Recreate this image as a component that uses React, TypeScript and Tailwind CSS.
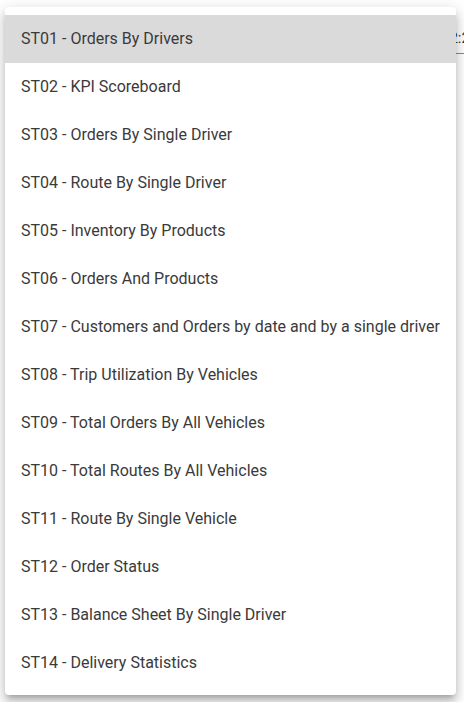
import React from "react";

const items = [
  "ST01 - Orders By Drivers",
  "ST02 - KPI Scoreboard",
  "ST03 - Orders By Single Driver",
  "ST04 - Route By Single Driver",
  "ST05 - Inventory By Products",
  "ST06 - Orders And Products",
  "ST07 - Customers and Orders by date and by a single driver",
  "ST08 - Trip Utilization By Vehicles",
  "ST09 - Total Orders By All Vehicles",
  "ST10 - Total Routes By All Vehicles",
  "ST11 - Route By Single Vehicle",
  "ST12 - Order Status",
  "ST13 - Balance Sheet By Single Driver",
  "ST14 - Delivery Statistics",
];

export default function App() {
  return (
    <div
      className="relative w-[464px] h-[702px] overflow-hidden bg-white"
      style={{ fontFamily: "Roboto, 'Liberation Sans', sans-serif" }}
    >
      {/* background content peeking out */}
      <div className="absolute left-[380px] top-[24px] w-[84px] h-[30px] border-b border-[#8a8a8a] flex items-center overflow-hidden">
        <span className="ml-[61px] text-[15px] text-[#333] whitespace-nowrap">12:20</span>
      </div>

      {/* menu */}
      <div className="absolute left-[5px] top-[7px] w-[451px] rounded-[4px] bg-white py-2 shadow-[0px_5px_5px_-3px_rgba(0,0,0,0.2),0px_8px_10px_1px_rgba(0,0,0,0.14),0px_3px_14px_2px_rgba(0,0,0,0.12)]">
        <ul>
          {items.map((t, i) => (
            <li
              key={t}
              className={`h-[48px] flex items-center pl-4 pr-4 text-[16px] leading-[24px] text-[#3a3a3a] whitespace-nowrap ${
                i === 0 ? "bg-[#dadada]" : ""
              }`}
            >
              {t}
            </li>
          ))}
        </ul>
      </div>
    </div>
  );
}
